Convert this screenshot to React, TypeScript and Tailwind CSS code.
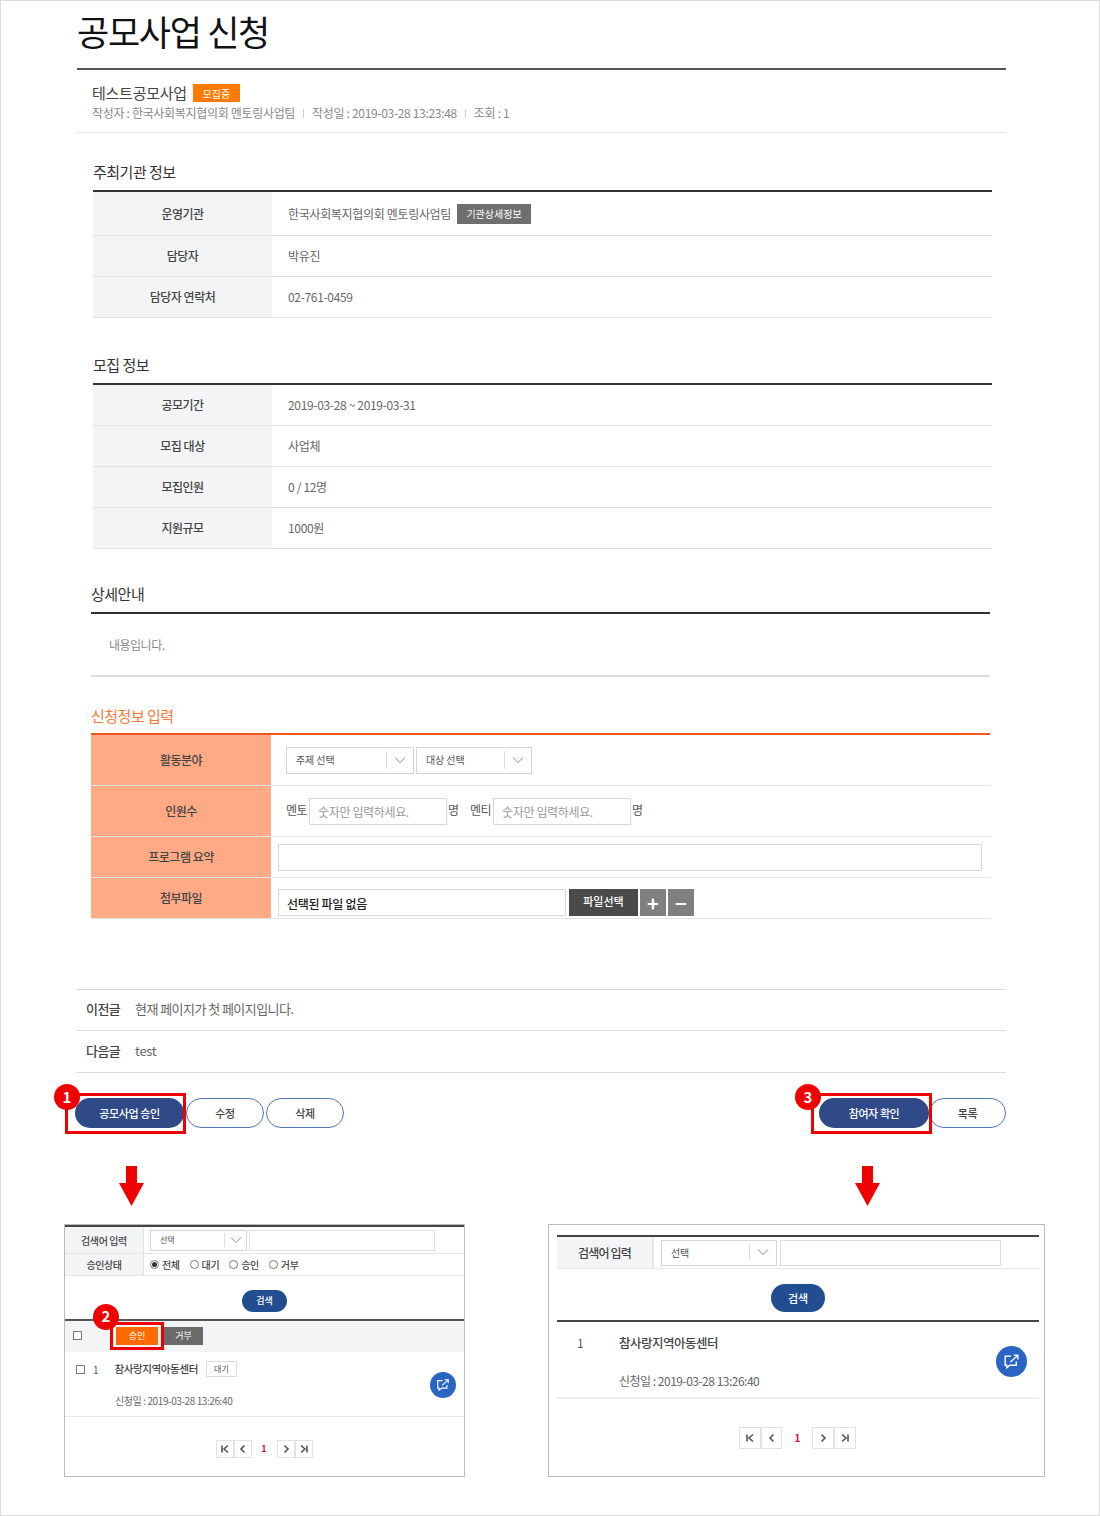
import type { ReactNode } from 'react';

const FONT = "font-['Noto_Sans_CJK_KR','Noto_Sans',sans-serif]";

const Chevron = ({ size = 12 }: { size?: number }) => (
  <svg width={size} height={size} viewBox="0 0 12 12" fill="none" stroke="#888" strokeWidth="1">
    <path d="M1 3.500 6 8.500 11 3.500" />
  </svg>
);

const SelectBox = ({ label, className, divider, text = 'text-[10px] tracking-[-0.1px]' }: { label: string; className: string; divider: string; text?: string }) => (
  <div className={`flex items-center border border-[#d5d5d5] bg-white ${className}`}>
    <span className={`flex-1 pb-[1px] pl-[9px] text-[#555] ${text}`}>{label}</span>
    <span className={`flex h-[70%] items-center justify-center border-l border-[#ddd] ${divider}`}>
      <Chevron />
    </span>
  </div>
);

const Row = ({ label, h, children }: { label: string; h: string; children: ReactNode }) => (
  <div className={`flex border-b border-[#e2e2e2] ${h}`}>
    <div className="flex w-[179px] items-center justify-center bg-[#f3f4f6] text-[12px] font-medium tracking-[-0.5px] text-[#444]">{label}</div>
    <div className="flex flex-1 items-center pl-[16px] text-[12px] tracking-[-0.33px] text-[#666]">{children}</div>
  </div>
);

const OrangeRow = ({ label, h, children }: { label: string; h: string; children: ReactNode }) => (
  <div className={`flex border-b border-[#e4e4e4] ${h}`}>
    <div className="flex w-[180px] items-center justify-center bg-[#ffaa85] text-[12px] font-medium tracking-[-0.5px] text-[#444]">{label}</div>
    <div className="flex flex-1 items-center text-[12px] text-[#555]">{children}</div>
  </div>
);

const PillButton = ({ label, className }: { label: string; className: string }) => (
  <button className={`flex h-[30px] items-center justify-center rounded-full text-[11px] font-medium tracking-[-0.4px] ${className}`}>{label}</button>
);

const Badge = ({ n, className }: { n: number; className: string }) => (
  <span className={`absolute flex h-[26px] w-[26px] items-center justify-center rounded-full bg-[#f00000] text-[15px] font-bold text-white ${className}`}>{n}</span>
);

const DownArrow = ({ className }: { className: string }) => (
  <svg className={className} width="25" height="40" viewBox="0 0 25 40" fill="#f00000">
    <path d="M7 0H18V17H25L12.500 40 0 17H7Z" />
  </svg>
);

const ShareIcon = ({ size }: { size: number }) => (
  <svg width={size} height={size} viewBox="0 0 16 16" fill="none" stroke="#fff" strokeWidth="1.3">
    <path d="M7.500 3H2v8.500h1.500V14l3-2.500H12.500V8" />
    <path d="M7 8.500 13.500 2.500M10 2h4v4" />
  </svg>
);

const PageBtn = ({ d, className }: { d: string; className: string }) => (
  <span className={`flex items-center justify-center border border-[#e2e2e2] bg-white ${className}`}>
    <svg width="10" height="10" viewBox="0 0 10 10" fill="none" stroke="#555" strokeWidth="1.6">
      <path d={d} />
    </svg>
  </span>
);

const FIRST = 'M2 1.500V8.500M8 1.500 4 5 8 8.500';
const PREV = 'M6.500 1.500 3 5 6.500 8.500';
const NEXT = 'M3.500 1.500 7 5 3.500 8.500';
const LAST = 'M2 1.500 6 5 2 8.500M8 1.500V8.500';

const Radio = ({ label, on }: { label: string; on?: boolean }) => (
  <span className="flex items-center gap-[3px]">
    <span className="flex h-[9px] w-[9px] items-center justify-center rounded-full border border-[#777] bg-white">
      {on && <span className="h-[5px] w-[5px] rounded-full bg-[#333]" />}
    </span>
    {label}
  </span>
);

const LeftPanel = () => (
  <div className="box-border flex h-[253px] w-[401px] flex-col border border-[#bbb] bg-white">
    <div className="flex h-[29px] border-b border-[#e4e4e4] border-t-2 border-t-[#444]">
      <div className="flex w-[79px] items-center justify-center border-r border-[#e4e4e4] bg-[#f3f4f6] text-[10px] font-medium tracking-[-0.4px] text-[#444]">검색어 입력</div>
      <div className="flex items-center pl-[6px]">
        <SelectBox label="선택" className="h-[21px] w-[97px]" divider="w-[22px]" text="text-[8px]" />
        <div className="ml-[2px] h-[21px] w-[186px] border border-[#e0e0e0]" />
      </div>
    </div>
    <div className="flex h-[22px] border-b border-[#e4e4e4]">
      <div className="flex w-[79px] items-center justify-center border-r border-[#e4e4e4] bg-[#f3f4f6] text-[10px] font-medium tracking-[-0.4px] text-[#444]">승인상태</div>
      <div className="flex items-center gap-[10px] pl-[6px] text-[10px] font-medium tracking-[-0.4px] text-[#444]">
        <Radio label="전체" on />
        <Radio label="대기" />
        <Radio label="승인" />
        <Radio label="거부" />
      </div>
    </div>
    <div className="flex h-[43px] items-center justify-center pt-[6px]">
      <button className="flex h-[22px] w-[45px] items-center justify-center rounded-full bg-[#224e91] text-[9px] font-medium text-white">검색</button>
    </div>
    <div className="relative flex h-[33px] items-center border-t-2 border-[#555] bg-[#f3f4f6] pb-[2px] pl-[8px]">
      <span className="h-[9px] w-[9px] border border-[#777] bg-white" />
      <div className="relative ml-[34px] flex items-center gap-[6px]">
        <span className="flex h-[18px] w-[42px] items-center justify-center bg-[#ff6a00] text-[9px] text-white">승인</span>
        <span className="flex h-[18px] w-[39px] items-center justify-center bg-[#6a6a6a] text-[9px] text-white">거부</span>
        <span className="absolute left-[-6px] top-[-5px] h-[28px] w-[54px] border-[3px] border-[#f00000]" />
        <Badge n={2} className="left-[-23px] top-[-23px]" />
      </div>
    </div>
    <div className="relative h-[65px] border-b border-[#e8e8e8] pl-[11px] text-[#555]">
      <div className="flex items-center pt-[9px]">
        <span className="h-[9px] w-[9px] border border-[#777]" />
        <span className="ml-[8px] text-[10px]">1</span>
        <span className="ml-[16px] text-[10.500px] font-medium tracking-[-0.4px] text-[#444]">참사랑지역아동센터</span>
        <span className="ml-[8px] flex h-[16px] w-[31px] items-center justify-center border border-[#ddd] text-[8px]">대기</span>
      </div>
      <div className="mt-[16px] pl-[39px] text-[10px] tracking-[-0.4px] text-[#666]">신청일 : 2019-03-28 13:26:40</div>
      <span className="absolute right-[8px] top-[20px] flex h-[26px] w-[26px] items-center justify-center rounded-full bg-[#2a65c4]">
        <ShareIcon size={14} />
      </span>
    </div>
    <div className="flex flex-1 items-center justify-center pr-[1px] pt-[5px]">
      <PageBtn d={FIRST} className="h-[18px] w-[18px]" />
      <PageBtn d={PREV} className="h-[18px] w-[18px]" />
      <span className="w-[25px] text-center text-[9px] font-bold text-[#d01045]">1</span>
      <PageBtn d={NEXT} className="h-[18px] w-[18px]" />
      <PageBtn d={LAST} className="h-[18px] w-[18px]" />
    </div>
  </div>
);

const RightPanel = () => (
  <div className="box-border flex h-[253px] w-[497px] flex-col border border-[#bbb] bg-white pl-[8px] pr-[5px] pt-[10px]">
    <div className="flex h-[34px] border-b border-[#e6e6e6] border-t-2 border-t-[#444]">
      <div className="flex w-[97px] items-center justify-center border-r-2 border-[#e8e8e8] bg-[#f3f4f6] text-[12px] font-medium tracking-[-0.8px] text-[#444]">검색어 입력</div>
      <div className="flex items-center pl-[7px]">
        <SelectBox label="선택" className="h-[26px] w-[116px]" divider="w-[27px]" />
        <div className="ml-[3px] h-[26px] w-[221px] border border-[#ddd]" />
      </div>
    </div>
    <div className="flex h-[51px] items-center justify-center pt-[7px]">
      <button className="flex h-[28px] w-[54px] items-center justify-center rounded-full bg-[#224e91] text-[11px] font-medium text-white">검색</button>
    </div>
    <div className="relative h-[79px] border-b-2 border-[#eee] border-t-2 border-t-[#444] text-[#555]">
      <div className="flex items-center pt-[12px]">
        <span className="ml-[20px] w-[42px] text-[12px]">1</span>
        <span className="text-[12.500px] font-medium tracking-[-0.5px] text-[#444]">참사랑지역아동센터</span>
      </div>
      <div className="mt-[19px] pl-[62px] text-[12px] tracking-[-0.5px] text-[#666]">신청일 : 2019-03-28 13:26:40</div>
      <span className="absolute right-[12px] top-[24px] flex h-[31px] w-[31px] items-center justify-center rounded-full bg-[#2a65c4]">
        <ShareIcon size={17} />
      </span>
    </div>
    <div className="flex flex-1 items-center justify-center pr-[1px]">
      <PageBtn d={FIRST} className="h-[22px] w-[22px]" />
      <PageBtn d={PREV} className="h-[22px] w-[21px]" />
      <span className="w-[30px] pl-[1px] text-center text-[10px] font-bold text-[#d01045]">1</span>
      <PageBtn d={NEXT} className="h-[22px] w-[22px]" />
      <PageBtn d={LAST} className="h-[22px] w-[22px]" />
    </div>
  </div>
);

export default function App() {
  return (
    <div className={`${FONT} box-border flex h-[1516px] w-[1100px] flex-col border border-[#dcdcdc] bg-white`}>
      <div className="ml-[76px] w-[929px]">
        <div className="flex h-[69px] items-center border-b-2 border-[#555] pb-[8px]">
          <h1 className="text-[35px] leading-none tracking-[-1.3px] text-[#111]">공모사업 신청</h1>
        </div>
        <div className="h-[63px] border-b border-[#e5e5e5] pl-[15px] pt-[13px]">
          <div className="flex h-[20px] items-center">
            <span className="text-[15px] tracking-[-0.25px] text-[#444]">테스트공모사업</span>
            <span className="ml-[6px] flex h-[18px] w-[47px] items-center justify-center bg-[#ff7a00] text-[10px] text-white">모집중</span>
          </div>
          <div className="mt-[1px] flex items-center text-[12px] tracking-[-0.32px] text-[#888]">
            <span>작성자 : 한국사회복지협의회 멘토링사업팀</span>
            <span className="mx-[8px] h-[9px] w-px bg-[#ccc]" />
            <span>작성일 : 2019-03-28 13:23:48</span>
            <span className="mx-[8px] h-[9px] w-px bg-[#ccc]" />
            <span>조회 : 1</span>
          </div>
        </div>
      </div>

      <section className="ml-[92px] w-[899px]">
        <h2 className="box-border flex h-[59px] items-center border-b-2 border-[#333] pt-[22px] text-[15px] font-normal tracking-[-0.5px] text-[#333]">주최기관 정보</h2>
        <Row label="운영기관" h="h-[44px]">
          한국사회복지협의회 멘토링사업팀
          <span className="ml-[6px] flex h-[20px] w-[74px] items-center justify-center bg-[#6f6f6f] text-[10px] tracking-[0px] text-white">기관상세정보</span>
        </Row>
        <Row label="담당자" h="h-[41px]">박유진</Row>
        <Row label="담당자 연락처" h="h-[41px]">02-761-0459</Row>
      </section>

      <section className="ml-[92px] w-[899px]">
        <h2 className="box-border flex h-[67px] items-center border-b-2 border-[#333] pt-[30px] text-[15px] font-normal tracking-[-0.5px] text-[#333]">모집 정보</h2>
        <Row label="공모기간" h="h-[41px]">2019-03-28 ~ 2019-03-31</Row>
        <Row label="모집 대상" h="h-[41px]">사업체</Row>
        <Row label="모집인원" h="h-[41px]">0 / 12명</Row>
        <Row label="지원규모" h="h-[41px]">1000원</Row>
      </section>

      <section className="ml-[90px] w-[899px]">
        <h2 className="box-border flex h-[65px] items-center border-b-2 border-[#333] pt-[28px] text-[15px] font-normal tracking-[-0.5px] text-[#333]">상세안내</h2>
        <div className="flex h-[63px] items-center border-b-2 border-[#ddd] pl-[18px] text-[12px] tracking-[-0.5px] text-[#888]">내용입니다.</div>
      </section>

      <section className="ml-[90px] w-[899px]">
        <h2 className="box-border flex h-[58px] items-center border-b-2 border-[#f4581c] pt-[22px] text-[15px] font-normal tracking-[-0.5px] text-[#f47a3a]">신청정보 입력</h2>
        <OrangeRow label="활동분야" h="h-[51px]">
          <div className="flex gap-[2px] pl-[15px]">
            <SelectBox label="주제 선택" className="h-[27px] w-[128px]" divider="w-[27px]" />
            <SelectBox label="대상 선택" className="h-[27px] w-[116px]" divider="w-[27px]" />
          </div>
        </OrangeRow>
        <OrangeRow label="인원수" h="h-[51px]">
          <div className="flex items-center pl-[15px] tracking-[-0.5px]">
            <span className="w-[23px] pb-[3px]">멘토</span>
            <input readOnly placeholder="숫자만 입력하세요." className="box-border h-[27px] w-[138px] border border-[#d8d8d8] pl-[8px] text-[12px] tracking-[-0.35px] placeholder:text-[#999]" />
            <span className="ml-[1px] w-[22px] pb-[3px]">명</span>
            <span className="w-[23px] pb-[3px]">멘티</span>
            <input readOnly placeholder="숫자만 입력하세요." className="box-border h-[27px] w-[138px] border border-[#d8d8d8] pl-[8px] text-[12px] tracking-[-0.35px] placeholder:text-[#999]" />
            <span className="ml-[1px] pb-[3px]">명</span>
          </div>
        </OrangeRow>
        <OrangeRow label="프로그램 요약" h="h-[41px]">
          <input readOnly className="ml-[7px] box-border h-[27px] w-[704px] border border-[#d8d8d8]" />
        </OrangeRow>
        <OrangeRow label="첨부파일" h="h-[41px]">
          <div className="ml-[7px] flex items-end pt-[9px]">
            <div className="box-border flex h-[27px] w-[288px] items-center border border-[#d8d8d8] pl-[8px] pt-[2px] text-[12px] font-medium tracking-[-0.3px] text-[#222]">선택된 파일 없음</div>
            <span className="ml-[3px] flex h-[27px] w-[69px] items-center justify-center bg-[#4a4a4a] pb-[3px] text-[11px] font-medium text-white">파일선택</span>
            <span className="ml-[2px] flex h-[27px] w-[26px] items-center justify-center bg-[#808080] text-[20px] font-bold leading-none text-white">+</span>
            <span className="ml-[2px] flex h-[27px] w-[26px] items-center justify-center bg-[#808080] text-[20px] font-bold leading-none text-white">−</span>
          </div>
        </OrangeRow>
      </section>

      <div className="ml-[75px] mt-[70px] w-[930px] border-t border-[#ddd] text-[13px] tracking-[-0.55px]">
        <div className="flex h-[41px] items-center border-b border-[#ddd] pb-[2px] pl-[10px]">
          <span className="w-[49px] font-medium text-[#444]">이전글</span>
          <span className="text-[#666]">현재 페이지가 첫 페이지입니다.</span>
        </div>
        <div className="flex h-[42px] items-center border-b border-[#ddd] pb-[2px] pl-[10px]">
          <span className="w-[49px] font-medium text-[#444]">다음글</span>
          <span className="tracking-[-0.3px] text-[#666]">test</span>
        </div>
      </div>

      <div className="ml-[74px] mt-[25px] flex w-[931px] justify-between">
        <div className="flex items-center gap-[2px]">
          <div className="relative">
            <PillButton label="공모사업 승인" className="w-[109px] bg-[#2f4a87] text-white" />
            <span className="absolute left-[-10px] top-[-5px] h-[41px] w-[121px] border-[3px] border-[#f00000]" />
            <Badge n={1} className="left-[-21px] top-[-14px]" />
          </div>
          <PillButton label="수정" className="w-[78px] border border-[#4f77b5] text-[#444]" />
          <PillButton label="삭제" className="w-[78px] border border-[#4f77b5] text-[#444]" />
        </div>
        <div className="flex items-center">
          <div className="relative">
            <PillButton label="참여자 확인" className="w-[110px] bg-[#2f4a87] text-white" />
            <span className="absolute left-[-8px] top-[-5px] h-[41px] w-[121px] border-[3px] border-[#f00000]" />
            <Badge n={3} className="left-[-24px] top-[-14px]" />
          </div>
          <PillButton label="목록" className="w-[77px] border border-[#4f77b5] text-[#444]" />
        </div>
      </div>

      <div className="mt-[38px] flex h-[40px]">
        <DownArrow className="ml-[118px]" />
        <DownArrow className="ml-[711px]" />
      </div>

      <div className="ml-[63px] mt-[18px] flex gap-[83px]">
        <LeftPanel />
        <RightPanel />
      </div>
    </div>
  );
}
